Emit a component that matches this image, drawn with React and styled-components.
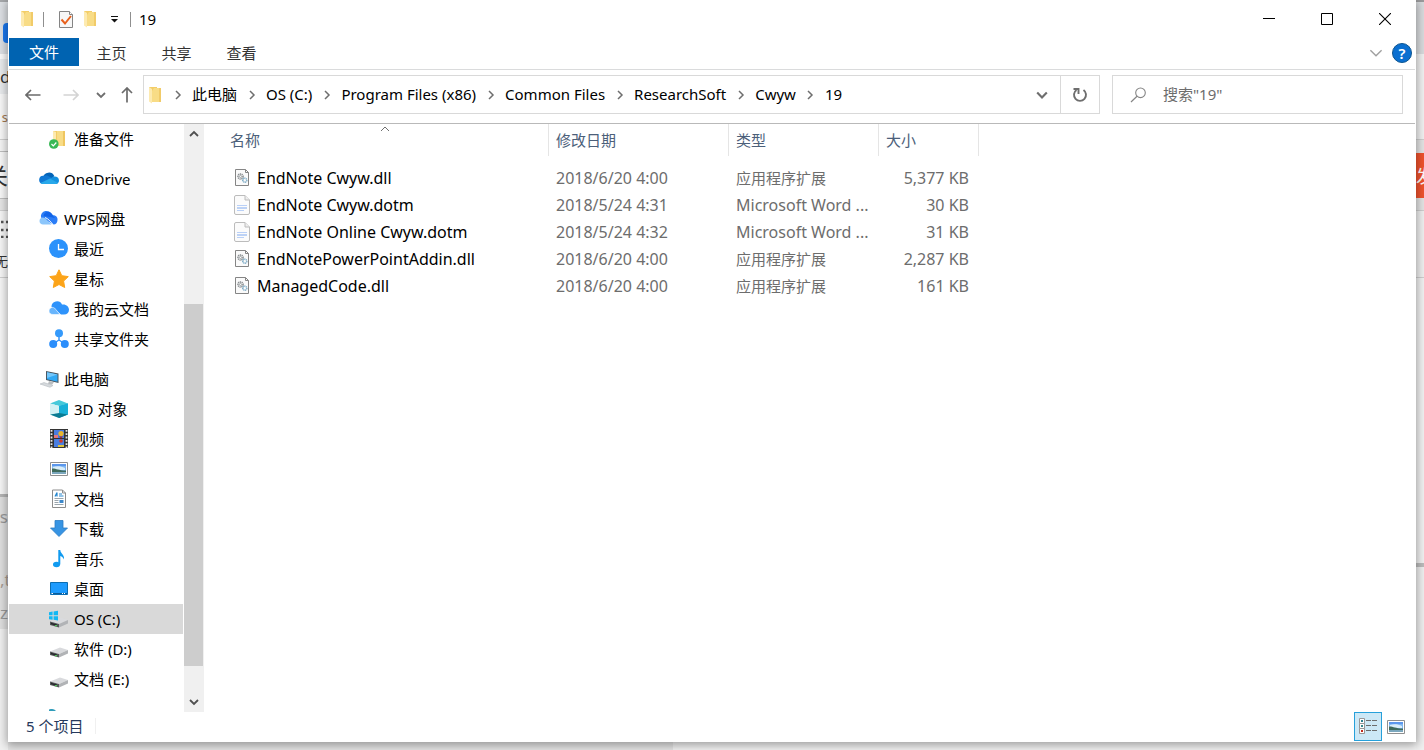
import React from 'react';
import styled, { createGlobalStyle } from 'styled-components';

const GlobalStyle = createGlobalStyle`
  * { box-sizing: border-box; }
  body { margin: 0; background: #ececec; }
  body, button, input, table {
    font-family: "Noto Sans", "Noto Sans CJK SC", sans-serif;
    font-size: 15px;
    line-height: 20px;
    color: #000;
  }
  button { border: 0; padding: 0; background: none; }
  svg { display: block; flex: none; }
`;

/* ---------- desktop behind the window ---------- */

const Desktop = styled.div`
  display: grid;
  grid-template-columns: 8px minmax(0, 1fr) 8px;
  grid-template-rows: minmax(0, 1fr) 8px;
  height: 100vh;
  overflow: hidden;
`;

const Strip = styled.div`
  display: flex;
  flex-direction: column;
  grid-row: 1 / 3;
  overflow: hidden;
  background: #f0f0f0;
`;

const Slice = styled.div`
  display: flex;
  flex: ${(p) => (p.$h ? `0 0 ${p.$h}px` : '1 0 0')};
  align-items: center;
  justify-content: ${(p) => p.$align || 'flex-end'};
  overflow: hidden;
  white-space: nowrap;
  background: ${(p) => p.$bg};
  color: ${(p) => p.$color || '#333'};
  font-size: ${(p) => p.$size || 15}px;
`;

const BlueChip = styled.span`
  flex: none;
  width: 5px;
  height: 20px;
  margin-top: 10px;
  border-radius: 4px 0 0 4px;
  background: #1a78f0;
`;

const BottomStrip = styled.div`
  grid-column: 2;
  grid-row: 2;
  display: flex;
`;

const BottomPart = styled.div`
  flex: ${(p) => p.$grow} 0 0;
  background: ${(p) => p.$bg};
`;

/* ---------- window ---------- */

const Window = styled.main`
  position: relative;
  grid-column: 2;
  grid-row: 1;
  display: flex;
  flex-direction: column;
  min-width: 0;
  padding: 0 1px;
  background: #fff;
  box-shadow: 0 2px 9px 1px rgba(0, 0, 0, 0.36);
`;

const TitleBar = styled.header`
  display: flex;
  flex: 0 0 38px;
  align-items: center;
  gap: 8px;
  padding-left: 10px;
`;

const QuickButton = styled.button`
  display: flex;
  align-items: center;
  justify-content: center;
  width: 16px;
  height: 24px;
`;

const Separator = styled.span`
  width: 1px;
  height: 15px;
  margin-right: ${(p) => (p.$wide ? 6 : 0)}px;
  background: #8f8f8f;
`;

const Title = styled.h1`
  flex: 1;
  margin: 0;
  font-size: 15px;
  font-weight: 400;
`;

const WindowControls = styled.div`
  display: flex;
  align-self: stretch;
  padding-right: 1px;
`;

const ControlButton = styled.button`
  display: flex;
  align-items: center;
  justify-content: center;
  width: 58px;
`;

const Ribbon = styled.div`
  display: flex;
  flex: 0 0 32px;
  padding-right: 3px;
  border-bottom: 1px solid #dadbdc;
`;

const Tab = styled.button`
  width: ${(p) => (p.$primary ? 70 : 65)}px;
  height: ${(p) => (p.$primary ? 28 : 30)}px;
  background: ${(p) => (p.$primary ? '#0063b1' : 'transparent')};
  color: ${(p) => (p.$primary ? '#fff' : '#333')};
`;

const RibbonTools = styled.div`
  display: flex;
  align-items: center;
  gap: 9px;
  height: 30px;
  margin-left: auto;
`;

const HelpButton = styled.button`
  width: 20px;
  height: 20px;
  border: 1px solid #0d5590;
  border-radius: 50%;
  background: #0a6fd0;
  color: #fff;
  font-weight: 600;
  line-height: 18px;
`;

const NavBar = styled.div`
  display: flex;
  flex: 0 0 54px;
  align-items: stretch;
  padding: 5px 12px 9px 5px;
  border-bottom: 1px solid #b9b9b9;
`;

const NavButton = styled.button`
  display: flex;
  align-items: center;
  justify-content: center;
  width: ${(p) => p.$w}px;
`;

const AddressBox = styled.div`
  display: flex;
  flex: 1;
  align-items: center;
  min-width: 0;
  margin: 0 12px 0 1px;
  border: 1px solid #d9d9d9;
`;

const Crumbs = styled.ol`
  display: flex;
  flex: 1;
  align-items: center;
  min-width: 0;
  margin: 0;
  padding: 0 0 0 3px;
  list-style: none;
  overflow: hidden;
  white-space: nowrap;
`;

const Crumb = styled.li`
  display: flex;
  align-items: center;
  button { padding-bottom: 2px; }
`;

const CrumbArrow = styled.span`
  display: flex;
  justify-content: center;
  width: 29px;
`;

const RefreshButton = styled.button`
  display: flex;
  align-items: center;
  justify-content: center;
  align-self: stretch;
  width: 39px;
  border-left: 1px solid #d9d9d9;
`;

const SearchBox = styled.label`
  display: flex;
  flex: 0 1 291px;
  align-items: center;
  gap: 16px;
  padding-left: 17px;
  border: 1px solid #d9d9d9;
`;

const SearchInput = styled.input`
  flex: 1;
  min-width: 0;
  padding: 0 0 2px;
  border: 0;
  outline: 0;
  background: none;
  &::placeholder { color: #6d6d6d; opacity: 1; }
`;

/* ---------- body ---------- */

const Body = styled.div`
  display: flex;
  flex: 1;
  min-height: 0;
`;

const Tree = styled.nav`
  display: flex;
  flex: 0 0 174px;
  flex-direction: column;
  gap: 10px;
  overflow: hidden;
`;

const TreeGroup = styled.ul`
  flex: none;
  margin: 0;
  padding: 0;
  list-style: none;
`;

const TreeLink = styled.a`
  display: flex;
  align-items: center;
  gap: 5px;
  height: 30px;
  padding-left: ${(p) => (p.$nested ? 40 : 30)}px;
  background: ${(p) => (p.$selected ? '#d9d9d9' : 'transparent')};
  color: #000;
  text-decoration: none;
  white-space: nowrap;
`;

const ScrollBar = styled.div`
  display: flex;
  flex: 0 0 20px;
  flex-direction: column;
  margin-left: 1px;
  background: #f0f0f0;
`;

const ScrollButton = styled.button`
  display: flex;
  flex: 0 0 20px;
  align-items: center;
  justify-content: center;
`;

const ScrollPart = styled.div`
  flex: ${(p) => p.$grow} 0 0;
  margin-right: 1px;
  background: ${(p) => (p.$thumb ? '#cdcdcd' : 'transparent')};
`;

const FilePane = styled.section`
  flex: 1;
  min-width: 0;
  padding-left: 18px;
  overflow: hidden;
`;

const FileTable = styled.table`
  width: 757px;
  table-layout: fixed;
  border-collapse: separate;
  border-spacing: 0;
  tbody::before {
    content: "";
    display: block;
    height: 8px;
  }
`;

const HeadCell = styled.th`
  position: relative;
  width: ${(p) => p.$w}px;
  height: 32px;
  padding: 0 0 0 ${(p) => (p.$first ? 8 : 7)}px;
  border-right: 1px solid #e5e5e5;
  color: #4c607a;
  font-weight: 400;
  text-align: left;
`;

const SortMark = styled.span`
  position: absolute;
  top: 0;
  left: 50%;
  transform: translateX(-50%);
`;

const Cell = styled.td`
  height: 27px;
  padding: 0 10px 0 7px;
  overflow: hidden;
  color: #6d6d6d;
  font-size: ${(p) => (p.$cjk ? 15 : 16)}px;
  text-align: ${(p) => (p.$right ? 'right' : 'left')};
  white-space: nowrap;
`;

const NameCell = styled(Cell)`
  padding-left: 12px;
  color: #000;
`;

const FileName = styled.span`
  display: flex;
  align-items: center;
  gap: 7px;
`;

const StatusBar = styled.footer`
  display: flex;
  flex: 0 0 30px;
  align-items: stretch;
  padding: 0 5px 0 17px;
`;

const ItemCount = styled.span`
  align-self: center;
  margin-bottom: 2px;
  padding-right: 12px;
  border-right: 1px solid #f0f0f0;
  color: #26395c;
  line-height: 16px;
`;

const ViewButtons = styled.div`
  display: flex;
  margin-left: auto;
  padding-bottom: 1px;
`;

const ViewButton = styled.button`
  display: flex;
  align-items: center;
  justify-content: center;
  width: 28px;
  border: 1px solid ${(p) => (p.$active ? '#26a0da' : 'transparent')};
  background: ${(p) => (p.$active ? '#cce8f6' : 'transparent')};
`;

/* ---------- icons ---------- */

const Folder = () => (
  <svg width="16" height="18" viewBox="0 0 16 18">
    <path d="M2 1h8v14H2z" fill="#f3cd68" />
    <path d="M7 2h7v14H5V5z" fill="#f8dc86" />
    <path d="M12 2h2v14h-2z" fill="#f1cb69" />
    <path d="M2 1l3 2v14.500l-3-2z" fill="#fdeab0" />
  </svg>
);

const CheckDoc = () => (
  <svg width="16" height="19" viewBox="0 0 16 19">
    <path d="M1.500 1.500h10l3 3v13h-13z" fill="#f7f7f7" stroke="#848484" />
    <path d="M11.500 1.500v3h3" fill="#fff" stroke="#848484" />
    <path d="M3.500 9.500l3.500 4 6-7.500" fill="none" stroke="#e8601c" strokeWidth="2" />
  </svg>
);

const Chevron = ({ dir = 'down', size = 10, color = '#6e6e6e', width = 1.8 }) => {
  const turn = { down: 0, up: 180, right: -90 }[dir];
  return (
    <svg width={size} height={size} viewBox="0 0 10 10">
      <path d="M1 3l4 4 4-4" fill="none" stroke={color} strokeWidth={width} transform={`rotate(${turn} 5 5)`} />
    </svg>
  );
};

const Arrow = ({ turn = 0, color = '#6b6b6b' }) => (
  <svg width="16" height="16" viewBox="0 0 16 16">
    <path d="M1 8h14.500M6 3L1 8l5 5" fill="none" stroke={color} strokeWidth="1.700" transform={`rotate(${turn} 8 8)`} />
  </svg>
);

const Refresh = () => (
  <svg width="16" height="16" viewBox="0 0 16 16">
    <path d="M11.500 3A6 6 0 1 1 4.500 3" fill="none" stroke="#6e6e6e" strokeWidth="1.900" />
    <path d="M1.500 2h5v5" fill="none" stroke="#6e6e6e" strokeWidth="1.900" />
  </svg>
);

const Magnifier = () => (
  <svg width="17" height="16" viewBox="0 0 17 16">
    <circle cx="10.500" cy="5.800" r="4.800" fill="none" stroke="#858585" strokeWidth="1.100" />
    <path d="M7 9.300L1 15" stroke="#858585" strokeWidth="1.200" />
  </svg>
);

const PictureArt = () => (
  <>
    <path d="M1.500 3.500h17v13h-17z" fill="#fff" stroke="#8f8f8f" />
    <path d="M3 5h14v10H3z" fill="#7fb6f2" />
    <path d="M3 5h14v2H3z" fill="#5c97ec" />
    <path d="M4 8c3-1 8-1 12 1v2H3z" fill="#d9edf8" />
    <path d="M3 9.500c5 0 6 2 14 2V13H3z" fill="#3f6b5c" />
    <path d="M3 13h14v2H3z" fill="#7ba7bd" />
  </>
);

const driveArt = (
  <>
    <path d="M1 12.500L11 8.500l8 2.500-9 4z" fill="#d9dadd" />
    <path d="M1 12.500l9 2.500v3.500L1 16z" fill="#55585a" />
    <path d="M10 15l9-4v3.500l-9 4z" fill="#b1b3b6" />
    <path d="M2 13.800l6 1.700v1.300l-6-1.600z" fill="#26282a" />
    <path d="M6 16h2v1.200H6z" fill="#51c458" />
  </>
);

const treeArt = {
  folderSync: (
    <>
      <path d="M4 2h8v13H4z" fill="#f3cd68" />
      <path d="M8 2h8v15H8z" fill="#f8dc86" />
      <path d="M14 2h2v15h-2z" fill="#efc660" />
      <path d="M4 2l3 1v14H4z" fill="#fdeab0" />
      <circle cx="4.800" cy="15" r="4.800" fill="#38b855" />
      <path d="M2.500 15l1.800 1.800 3-3.300" fill="none" stroke="#fff" strokeWidth="1.200" />
    </>
  ),
  oneDrive: (
    <>
      <path d="M4 8.500A6 6 0 0 1 15.300 7L11 12 3 11z" fill="#0364b8" />
      <path d="M4.500 6.800c2.500-.6 4.500 0 6 1l4 2L6 15H4A4 4 0 0 1 4.500 6.800z" fill="#0f78d4" />
      <path d="M10.500 10l3.500-2.100c3-1 6 .7 6 3.600 0 2-1.500 3.500-3.500 3.500H12z" fill="#1490df" />
      <path d="M1.500 14L11 9.500l8 4.500c-.7.800-1.500 1-2.500 1H4c-1 0-2-.3-2.500-1z" fill="#28a8ea" />
    </>
  ),
  wpsCloud: (
    <>
      <path d="M2 8.500a5.500 5.500 0 0 1 10.800-2.200C16.500 5.500 19 8 18.500 11c0 2.500-1.500 4.500-4 4.500z" fill="#2b7df7" />
      <path d="M4.500 7a4.500 4.500 0 0 1 7-3.500C14 5 13.500 7 16 9l-5-1z" fill="#1264e8" />
      <path d="M.5 12c0-3 3-4.500 5.500-3l6.500 6.500H4C2 15.500.5 14 .5 12z" fill="#8cc6fb" />
      <path d="M6 8.500c3 1 5 3.500 8 7" fill="none" stroke="#f2f9ff" strokeWidth="1" />
    </>
  ),
  clock: (
    <>
      <circle cx="9.500" cy="9.500" r="9.500" fill="#2b92fb" />
      <path d="M9.500 5v5.500H15" fill="none" stroke="#fff" strokeWidth="1.300" />
    </>
  ),
  star: (
    <path d="M10 .8l2.800 5.900 6.500.9-4.700 4.500 1.100 6.400L10 15.500l-5.700 3 1.100-6.400L.7 7.600l6.500-.9z" fill="#fca419" stroke="#fca419" strokeLinejoin="round" />
  ),
  cloudDoc: (
    <>
      <path d="M2.500 8A5.500 5.500 0 0 1 13 5.500c4-.7 7 2 7 5.200 0 3-2 4.800-5 4.800h-3z" fill="#2e93fb" />
      <path d="M0 12c0-3 3-4.500 5.500-3L11 15.500H4C1.500 15.500 0 14 0 12z" fill="#68b5fc" stroke="#fff" strokeWidth=".6" />
    </>
  ),
  share: (
    <>
      <path d="M10 5v6l-6 4M10 11l6 4" fill="none" stroke="#2b8efb" strokeWidth="1.400" />
      <circle cx="10" cy="4.200" r="4" fill="#359afb" />
      <circle cx="4.200" cy="15" r="4" fill="#2b8efb" />
      <circle cx="15.800" cy="15" r="4" fill="#2b8efb" />
    </>
  ),
  computer: (
    <>
      <path d="M7 2l12.500 2.500V14L7 11z" fill="#4b5761" />
      <path d="M8 3.300l10.500 2.100v7.300L8 10.200z" fill="#31a8f4" />
      <path d="M8 3.300l10.500 2.100L8 9z" fill="#73c6fa" />
      <path d="M10 12l5 1.200-2 2.500-4-1z" fill="#b9bdc0" />
      <path d="M1 15l4-1.500 9 3-3 1.800z" fill="#d5d9dc" stroke="#adb3b8" strokeWidth=".5" />
    </>
  ),
  cube: (
    <>
      <path d="M1 4.500L10 1l9 3.500L10 7z" fill="#45c9da" />
      <path d="M1 4.500L10 7v12l-9-3.500z" fill="#bfeaf0" />
      <path d="M10 7l9-2.500v11L10 19z" fill="#0fa0d2" />
      <path d="M10 13l9 2.500L10 19l-9-3.500z" fill="#0b7c93" />
      <path d="M1 4.500L10 7v7l-9 1.500z" fill="#d2f1f4" />
      <path d="M10 7l9-2.500v11L10 14z" fill="#19b0d8" />
    </>
  ),
  video: (
    <>
      <path d="M1 0h18v19H1z" fill="#333" />
      <path d="M5 1h10v8H5zM5 10h10v8H5z" fill="#4a7de0" />
      <path d="M2.500 1v18M17.500 1v18" stroke="#e6e6e6" strokeWidth="1.800" strokeDasharray="1.800 1.500" />
      <circle cx="12" cy="4.500" r="2.600" fill="#e9b52d" />
      <path d="M5 6h4v3H5z" fill="#e5767a" />
      <path d="M10 7.500h4l-2 2z" fill="#b52323" />
      <circle cx="12" cy="12" r="1.800" fill="#d23a2a" />
      <path d="M9 16h6v2H9z" fill="#dec33c" />
    </>
  ),
  picture: <PictureArt />,
  document: (
    <>
      <path d="M3.500 1h10l3 3v14.500h-13z" fill="#fff" stroke="#8d8d8d" />
      <path d="M13.500 1v3h3" fill="none" stroke="#8d8d8d" />
      <path d="M8 3.500L6 7.500M8 3.500V7.500M10 5h3M10 7h4.500" stroke="#2687cf" strokeWidth="1.200" />
      <path d="M5.500 9.500h9M5.500 11.500h4M5.500 13.500h4M5.500 15.500h9" stroke="#9aa5ad" />
      <path d="M10.500 11h4v3h-4z" fill="#3d88ca" />
    </>
  ),
  download: (
    <path d="M6 1.500h8V9h4.500L10 17.500 1.500 9H6z" fill="#3794e3" stroke="#2c7cc4" strokeWidth=".8" />
  ),
  music: (
    <>
      <ellipse cx="7.500" cy="15.500" rx="3.500" ry="2.700" fill="#119bf0" />
      <path d="M9.300 1h2c0 3.500 4.500 4.500 3.700 9.500-.8-2-2-3-3.700-3.500v8.500h-2z" fill="#119bf0" />
    </>
  ),
  desktop: (
    <>
      <path d="M1.500 3.500h17v12h-17z" fill="#1e9bfd" stroke="#0c6eb2" />
      <path d="M2 14.500h16" stroke="#0b5c99" />
      <path d="M2.500 14.500h1.500M13 14.500h1M15 14.500h1" stroke="#fff" />
    </>
  ),
  system: (
    <>
      {driveArt}
      <path d="M0 3.200l3.600-.6v3.600H0zM4.600 2.400L9 1.800v4.400H4.600zM0 7.200h3.600v3.500L0 10.200zM4.600 7.200H9v4.300l-4.400-.7z" fill="#12b8f4" />
    </>
  ),
  drive: driveArt,
  network: (
    <path d="M-2 8a6 6 0 0 1 9 0z" transform="translate(0 -6)" fill="#2f9cba" />
  ),
};

const TreeIcon = ({ name }) => (
  <svg width="20" height="20" viewBox="0 0 20 20" aria-hidden="true">{treeArt[name]}</svg>
);

const DllIcon = () => (
  <svg width="16" height="20" viewBox="0 0 16 20">
    <path d="M1.500 1.500h10l3 3v13h-13z" fill="#fafafa" stroke="#858585" />
    <path d="M11.500 1.500v3h3" fill="none" stroke="#858585" />
    <circle cx="6.500" cy="8.500" r="2.500" fill="none" stroke="#8b9093" strokeWidth="1.700" strokeDasharray="1.200 .6" />
    <circle cx="6.500" cy="8.500" r="1" fill="none" stroke="#7f8487" strokeWidth=".6" />
    <circle cx="10.800" cy="12.200" r="2" fill="none" stroke="#79a9c4" strokeWidth="1.500" strokeDasharray="1.100 .5" />
  </svg>
);

const WordIcon = () => (
  <svg width="16" height="20" viewBox="0 0 16 20">
    <path d="M2 .5h9L15.500 5v13q0 1.500-1.500 1.500H2Q.5 19.500.5 18V2Q.5.5 2 .5z" fill="#fbfbfb" stroke="#bcbcbc" />
    <path d="M11 .5V5h4.500" fill="#eee" stroke="#bcbcbc" />
    <path d="M3 10.500h10M3 15.500h7" stroke="#b9d0f7" />
    <path d="M3 13h10" stroke="#7fa9f0" />
  </svg>
);

const DetailsIcon = () => (
  <svg width="18" height="17" viewBox="0 0 18 17">
    {[0, 5, 10].map((y, i) => (
      <g key={y}>
        <path d={`M.5 ${y + 0.5}h5v5h-5z`} fill="#fff" stroke="#979797" />
        <path d={`M2 ${y + 2}h2v2H2z`} fill={['#2f8190', '#3a8a8d', '#c22a1d'][i]} />
        <path d={`M7 ${y + 2.5}h5M13 ${y + 2.5}h5`} stroke="#6c6c6c" />
      </g>
    ))}
  </svg>
);

/* ---------- data ---------- */

const crumbs = ['此电脑', 'OS (C:)', 'Program Files (x86)', 'Common Files', 'ResearchSoft', 'Cwyw', '19'];

const tree = [
  [{ icon: 'folderSync', label: '准备文件', nested: true }],
  [{ icon: 'oneDrive', label: 'OneDrive' }],
  [
    { icon: 'wpsCloud', label: 'WPS网盘' },
    { icon: 'clock', label: '最近', nested: true },
    { icon: 'star', label: '星标', nested: true },
    { icon: 'cloudDoc', label: '我的云文档', nested: true },
    { icon: 'share', label: '共享文件夹', nested: true },
  ],
  [
    { icon: 'computer', label: '此电脑' },
    { icon: 'cube', label: '3D 对象', nested: true },
    { icon: 'video', label: '视频', nested: true },
    { icon: 'picture', label: '图片', nested: true },
    { icon: 'document', label: '文档', nested: true },
    { icon: 'download', label: '下载', nested: true },
    { icon: 'music', label: '音乐', nested: true },
    { icon: 'desktop', label: '桌面', nested: true },
    { icon: 'system', label: 'OS (C:)', nested: true, selected: true },
    { icon: 'drive', label: '软件 (D:)', nested: true },
    { icon: 'drive', label: '文档 (E:)', nested: true },
  ],
];

const files = [
  { name: 'EndNote Cwyw.dll', date: '2018/6/20 4:00', type: '应用程序扩展', size: '5,377 KB', library: true },
  { name: 'EndNote Cwyw.dotm', date: '2018/5/24 4:31', type: 'Microsoft Word ...', size: '30 KB' },
  { name: 'EndNote Online Cwyw.dotm', date: '2018/5/24 4:32', type: 'Microsoft Word ...', size: '31 KB' },
  { name: 'EndNotePowerPointAddin.dll', date: '2018/6/20 4:00', type: '应用程序扩展', size: '2,287 KB', library: true },
  { name: 'ManagedCode.dll', date: '2018/6/20 4:00', type: '应用程序扩展', size: '161 KB', library: true },
];

const leftSlices = [
  { h: 2, bg: '#a6a8ab' },
  { h: 52, bg: '#dde0e4', chip: true },
  { h: 5, bg: '#fafafa' },
  { h: 35, bg: '#e9ebed', text: 'dr', size: 17, align: 'flex-start' },
  { h: 45, bg: '#f8f8f8', text: 's', color: '#a07850', size: 13 },
  { h: 1, bg: '#cfcfcf' },
  { h: 11, bg: '#f5f5f5' },
  { h: 1, bg: '#bfbfbf' },
  { h: 46, bg: '#f8f8f8', text: '关', size: 22 },
  { h: 1, bg: '#bfbfbf' },
  { h: 11, bg: '#e6e6e6' },
  { h: 1, bg: '#d0d0d0' },
  { h: 33, bg: '#f6f6f6', dots: true },
  { h: 33, bg: '#f6f6f6', text: '无', size: 13 },
  { h: 1, bg: '#cfcfcf' },
  { h: 216, bg: '#f6f6f6' },
  { h: 3, bg: '#b4b4b4' },
  { h: 40, bg: '#dfdfdf', text: 'os', color: '#999', size: 17 },
  { h: 26, bg: '#dfdfdf' },
  { h: 34, bg: '#dfdfdf', text: ',t', color: '#a99d92', size: 17, align: 'flex-start' },
  { h: 32, bg: '#dfdfdf', text: 'ze', color: '#999', size: 17, align: 'flex-start' },
  { bg: '#f0f0f0' },
];

const rightSlices = [
  { h: 2, bg: '#9b9b9d' },
  { h: 52, bg: '#d9dbde' },
  { h: 85, bg: '#f2f2f2' },
  { h: 1, bg: '#cfcfcf' },
  { h: 13, bg: '#e4e4e4' },
  { h: 45, bg: '#f0532d', text: '发', color: '#fff', size: 18, align: 'flex-start' },
  { h: 12, bg: '#e4e4e4' },
  { h: 1, bg: '#cfcfcf' },
  { h: 66, bg: '#f0f0f0' },
  { h: 1, bg: '#cfcfcf' },
  { h: 285, bg: '#f2f2f2' },
  { h: 4, bg: '#bdbdbd' },
  { bg: '#f0f0f0' },
];

const renderSlices = (slices) =>
  slices.map((s, i) => (
    <Slice key={i} $h={s.h} $bg={s.bg} $color={s.color} $size={s.size} $align={s.align}>
      {s.chip && <BlueChip />}
      {s.dots && (
        <svg width="8" height="20" viewBox="0 0 8 20">
          {[4, 12, 19].map((y) => (
            <path key={y} d={`M1 ${y}h2.500M6 ${y}h2`} stroke="#555" strokeWidth="2.500" />
          ))}
        </svg>
      )}
      {s.text}
    </Slice>
  ));

export default function App() {
  return (
    <>
      <GlobalStyle />
      <Desktop>
        <Strip>{renderSlices(leftSlices)}</Strip>
        <BottomStrip>
          <BottomPart $grow={665} $bg="#e4e4e4" />
          <BottomPart $grow={743} $bg="#f2f2f2" />
        </BottomStrip>
        <Strip>{renderSlices(rightSlices)}</Strip>

        <Window>
          <TitleBar>
            <QuickButton aria-label="菜单"><Folder /></QuickButton>
            <Separator $wide />
            <QuickButton aria-label="属性"><CheckDoc /></QuickButton>
            <QuickButton aria-label="新建文件夹"><Folder /></QuickButton>
            <QuickButton aria-label="自定义快速访问工具栏">
              <svg width="9" height="8" viewBox="0 0 9 8">
                <path d="M1 1.500h7" stroke="#111" />
                <path d="M1 4h7L4.500 7.500z" fill="#111" />
              </svg>
            </QuickButton>
            <Separator />
            <Title>19</Title>
            <WindowControls>
              <ControlButton aria-label="最小化">
                <svg width="12" height="12" viewBox="0 0 12 12"><path d="M0 5.500h12" stroke="#000" /></svg>
              </ControlButton>
              <ControlButton aria-label="最大化">
                <svg width="12" height="12" viewBox="0 0 12 12"><path d="M.5.500h11v11H.5z" fill="none" stroke="#000" /></svg>
              </ControlButton>
              <ControlButton aria-label="关闭">
                <svg width="12" height="12" viewBox="0 0 12 12"><path d="M0 0l12 12M12 0L0 12" stroke="#000" strokeWidth="1.100" /></svg>
              </ControlButton>
            </WindowControls>
          </TitleBar>

          <Ribbon>
            <Tab $primary>文件</Tab>
            <Tab>主页</Tab>
            <Tab>共享</Tab>
            <Tab>查看</Tab>
            <RibbonTools>
              <NavButton $w={14} aria-label="展开功能区"><Chevron size={14} color="#a0a0a0" width={1} /></NavButton>
              <HelpButton aria-label="帮助">?</HelpButton>
            </RibbonTools>
          </Ribbon>

          <NavBar>
            <NavButton $w={38} aria-label="后退"><Arrow /></NavButton>
            <NavButton $w={38} aria-label="前进"><Arrow turn={180} color="#d4d4d4" /></NavButton>
            <NavButton $w={22} aria-label="最近浏览的位置"><Chevron /></NavButton>
            <NavButton $w={30} aria-label="上移"><Arrow turn={90} /></NavButton>
            <AddressBox>
              <Crumbs>
                <Crumb><Folder /></Crumb>
                {crumbs.map((label) => (
                  <Crumb key={label}>
                    <CrumbArrow><Chevron dir="right" width={1.5} /></CrumbArrow>
                    <button>{label}</button>
                  </Crumb>
                ))}
              </Crumbs>
              <NavButton $w={36} aria-label="以前的位置"><Chevron size={12} /></NavButton>
              <RefreshButton aria-label="刷新"><Refresh /></RefreshButton>
            </AddressBox>
            <SearchBox>
              <Magnifier />
              <SearchInput type="text" placeholder={'搜索"19"'} aria-label="搜索" />
            </SearchBox>
          </NavBar>

          <Body>
            <Tree aria-label="导航窗格">
              {tree.map((group, i) => (
                <TreeGroup key={i}>
                  {group.map((item) => (
                    <li key={item.label}>
                      <TreeLink href="#" $nested={item.nested} $selected={item.selected}>
                        <TreeIcon name={item.icon} />
                        {item.label}
                      </TreeLink>
                    </li>
                  ))}
                </TreeGroup>
              ))}
              <TreeGroup>
                <li><TreeLink href="#" $nested aria-label="网络"><TreeIcon name="network" /></TreeLink></li>
              </TreeGroup>
            </Tree>
            <ScrollBar>
              <ScrollButton aria-label="向上滚动"><Chevron dir="up" color="#505050" /></ScrollButton>
              <ScrollPart $grow={160} />
              <ScrollPart $grow={362} $thumb />
              <ScrollPart $grow={26} />
              <ScrollButton aria-label="向下滚动"><Chevron color="#505050" /></ScrollButton>
            </ScrollBar>
            <FilePane>
              <FileTable>
                <thead>
                  <tr>
                    <HeadCell $w={327} $first>
                      <SortMark><Chevron dir="up" color="#707070" width={1} /></SortMark>
                      名称
                    </HeadCell>
                    <HeadCell $w={180}>修改日期</HeadCell>
                    <HeadCell $w={150}>类型</HeadCell>
                    <HeadCell $w={100}>大小</HeadCell>
                  </tr>
                </thead>
                <tbody>
                  {files.map(({ name, date, type, size, library }) => (
                    <tr key={name}>
                      <NameCell>
                        <FileName>{library ? <DllIcon /> : <WordIcon />}{name}</FileName>
                      </NameCell>
                      <Cell>{date}</Cell>
                      <Cell $cjk={library}>{type}</Cell>
                      <Cell $right>{size}</Cell>
                    </tr>
                  ))}
                </tbody>
              </FileTable>
            </FilePane>
          </Body>

          <StatusBar>
            <ItemCount>5 个项目</ItemCount>
            <ViewButtons>
              <ViewButton $active aria-label="详细信息"><DetailsIcon /></ViewButton>
              <ViewButton aria-label="大图标">
                <svg width="20" height="20" viewBox="0 0 20 20"><PictureArt /></svg>
              </ViewButton>
            </ViewButtons>
          </StatusBar>
        </Window>
      </Desktop>
    </>
  );
}
